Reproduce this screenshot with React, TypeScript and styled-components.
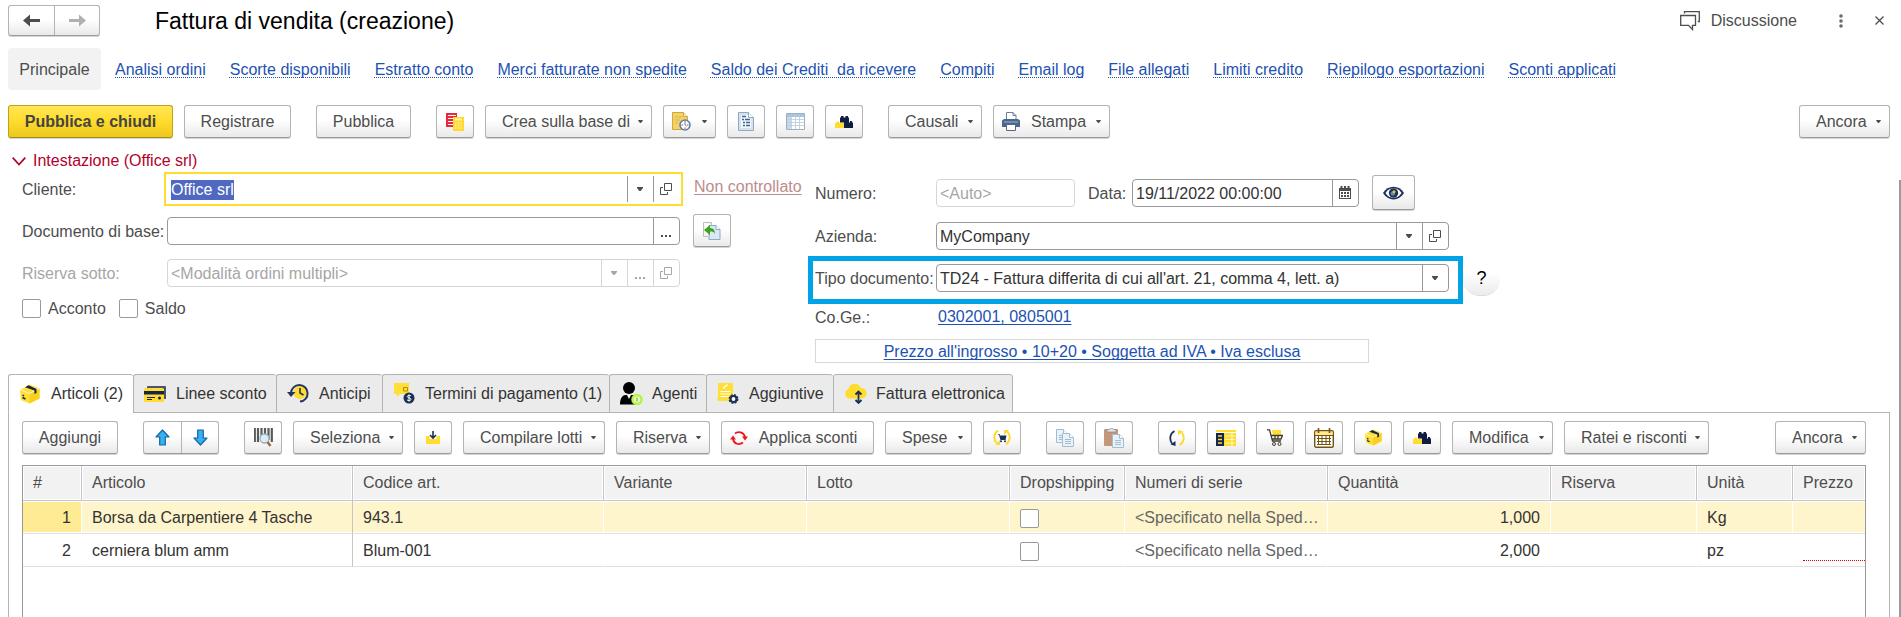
import React, { useEffect, useRef } from "react";
import styled, { createGlobalStyle, css } from "styled-components";

const GlobalStyle = createGlobalStyle`
  *, *::before, *::after { box-sizing: border-box; }
  body { margin: 0; background: #fff; }
  body, button, input, select {
    font-family: "Liberation Sans", Arial, sans-serif;
    font-size: 16px;
    line-height: 20px;
    color: #4d4d4d;
  }
  svg { display: block; flex: none; }
`;

/* ---------- page frame ---------- */

const Page = styled.div`
  display: flex;
  flex-direction: column;
  height: 100vh;
  overflow: hidden;
`;

const TitleBar = styled.header`
  display: flex;
  align-items: center;
  padding: 5px 17px 0 8px;
`;

const Title = styled.h1`
  flex: 1;
  margin: 0 0 0 55px;
  font-size: 23px;
  font-weight: 400;
  line-height: 30px;
  color: #000;
  white-space: nowrap;
`;

const buttonSkin = css`
  border: 1px solid #b3b3b3;
  border-bottom-color: #9b9b9b;
  border-radius: 3px;
  background: linear-gradient(#fff 45%, #e9e9e9);
  box-shadow: 0 1px 0 #d4d4d4;
`;

const Pair = styled.div<{ $cell: number; $height: number }>`
  ${buttonSkin}
  display: flex;
  height: ${(p) => p.$height}px;
  button {
    display: flex;
    align-items: center;
    justify-content: center;
    width: ${(p) => p.$cell}px;
    padding: 0;
    border: 0;
    background: none;
  }
  button + button {
    border-left: 1px solid #b3b3b3;
  }
`;

const PlainButton = styled.button`
  display: flex;
  align-items: center;
  gap: 11px;
  padding: 0;
  border: 0;
  background: none;
`;

const WindowActions = styled.div`
  display: flex;
  align-items: center;
  gap: 42px;
`;

const WindowControls = styled.div`
  display: flex;
  align-items: center;
  gap: 32px;
`;

const LinkBar = styled.nav`
  display: flex;
  align-items: center;
  gap: 24px;
  margin-top: 12px;
  padding: 0 8px;
  white-space: pre;
`;

const Current = styled.span`
  width: 93px;
  margin-right: -10px;
  padding: 12px 0 10px;
  border-radius: 4px;
  background: #f2f2f2;
  text-align: center;
`;

const NavLink = styled.a`
  padding-top: 2px;
  color: #1d52b3;
  text-decoration: underline dotted 1px;
  text-underline-offset: 2px;
  text-decoration-skip-ink: none;
`;

const Toolbar = styled.div<{ $inner?: boolean }>`
  display: flex;
  align-items: center;
  justify-content: space-between;
  padding: ${(p) => (p.$inner ? "8px 23px 11px 13px" : "15px 11px 0 8px")};
`;

const Groups = styled.div`
  display: flex;
  gap: 25px;
`;

const Group = styled.div`
  display: flex;
  gap: 11px;
`;

const Button = styled.button<{ $width: number; $menu?: boolean; $primary?: boolean; $tall?: boolean }>`
  ${buttonSkin}
  display: flex;
  flex: none;
  align-items: center;
  justify-content: ${(p) => (p.$menu ? "space-between" : "center")};
  gap: 8px;
  width: ${(p) => p.$width}px;
  height: ${(p) => (p.$tall ? 35 : 33)}px;
  padding: ${(p) => (p.$menu ? "0 8px 0 16px" : "0")};
  white-space: nowrap;
  ${(p) =>
    p.$primary &&
    css`
      border-color: #bfa01f;
      border-bottom-color: #a78b12;
      background: linear-gradient(#ffe658, #ffdd2d 45%, #edc81f);
      font-weight: 700;
      color: #444;
    `}
`;

const ButtonFace = styled.span<{ $tight?: boolean }>`
  display: flex;
  align-items: center;
  gap: 11px;
  margin-left: ${(p) => (p.$tight ? "-8px" : "0")};
`;

/* ---------- form ---------- */

const Body = styled.div`
  display: flex;
  flex: 1;
  min-height: 0;
`;

const Content = styled.main`
  display: flex;
  flex: 1;
  flex-direction: column;
  min-width: 0;
  padding: 13px 9px 0 8px;
`;

const ScrollBar = styled.div`
  flex: none;
  width: 2px;
  margin-top: 42px;
  background: #9b9b9b;
`;

const SectionHeader = styled.button`
  display: flex;
  align-items: center;
  align-self: flex-start;
  gap: 7px;
  padding: 0 0 0 4px;
  border: 0;
  background: none;
  color: #b3002d;
`;

const Form = styled.div`
  display: flex;
  padding: 4px 0 11px 14px;
`;

const LeftPane = styled.div`
  flex: 0 1 793px;
  display: flex;
  flex-direction: column;
`;

const RightPane = styled.div`
  flex: 1;
  display: flex;
  flex-direction: column;
`;

const Row = styled.div<{ $top?: number }>`
  display: flex;
  align-items: center;
  margin-top: ${(p) => p.$top ?? 0}px;
`;

const Label = styled.label<{ $width: number; $muted?: boolean; $indent?: boolean }>`
  flex: none;
  width: ${(p) => p.$width}px;
  padding: 2px 0 0 ${(p) => (p.$indent ? 13 : 0)}px;
  white-space: nowrap;
  color: ${(p) => (p.$muted ? "#a6a6a6" : "#4d4d4d")};
`;

const Field = styled.div<{ $width: number; $muted?: boolean; $focused?: boolean }>`
  display: flex;
  flex: 0 1 ${(p) => p.$width}px;
  min-width: 0;
  height: 28px;
  border: 1px solid ${(p) => (p.$focused ? "transparent" : p.$muted ? "#d6d6d6" : "#999")};
  border-radius: 4px;
  background: #fff;
  ${(p) =>
    p.$focused &&
    css`
      border-radius: 0;
      outline: 2px solid #ffdc30;
      outline-offset: 1px;
    `}
  input, select {
    flex: 1;
    width: 0;
    min-width: 0;
    padding: 2px 3px 0;
    border: 0;
    outline: 0;
    background: none;
    appearance: none;
    color: #333;
  }
  input::placeholder { color: #a6a6a6; opacity: 1; }
  input::selection { background: #5068c2; color: #fff; }
`;

const FieldButton = styled.button<{ $muted?: boolean }>`
  display: flex;
  align-items: center;
  justify-content: center;
  width: 26px;
  padding: 0 1px 0 0;
  border: 0;
  border-left: 1px solid ${(p) => (p.$muted ? "#d6d6d6" : "#999")};
  background: none;
  color: ${(p) => (p.$muted ? "#a6a6a6" : "#4d4d4d")};
`;

const SelectField = styled(Field)`
  position: relative;
`;

const SelectArrow = styled.span`
  position: absolute;
  inset: 0 0 0 auto;
  display: flex;
  align-items: center;
  justify-content: center;
  width: 26px;
  padding-right: 1px;
  border-left: 1px solid #999;
  pointer-events: none;
`;

const Aside = styled.div`
  margin-left: 13px;
`;

const StatusLink = styled.a`
  align-self: flex-start;
  margin-left: 14px;
  line-height: 24px;
  color: #bd8b8b;
  text-underline-offset: 2px;
  white-space: nowrap;
`;

const Check = styled.input.attrs({ type: "checkbox" })`
  flex: none;
  width: 19px;
  height: 19px;
  margin: 0;
  border: 1px solid #999;
  border-radius: 2px;
  background: #fff;
  appearance: none;
`;

const CheckLabel = styled.label`
  display: flex;
  align-items: center;
  gap: 7px;
  margin-right: 13px;
  height: 19px;
`;

const Highlight = styled.div`
  position: relative;
  display: flex;
  flex: 0 1 634px;
  align-items: center;
  &::after {
    content: "";
    position: absolute;
    inset: -8px -14px -12px -7px;
    border: 5px solid #00a2e8;
    pointer-events: none;
  }
`;

const HelpButton = styled.button`
  width: 37px;
  height: 34px;
  margin: -3px 0 -3px 14px;
  padding: 0;
  border: 0;
  border-radius: 18px;
  background: linear-gradient(#fff 35%, #ebebeb);
  box-shadow: 0 1px 0 #dcdcdc;
  font-size: 18px;
  color: #000;
`;

const TextLink = styled.a`
  color: #1d52b3;
  text-underline-offset: 2px;
  text-decoration-skip-ink: none;
  white-space: nowrap;
`;

const PriceBox = styled.div`
  width: 554px;
  margin-top: 11px;
  padding-top: 2px;
  border: 1px solid #d9d9d9;
  text-align: center;
`;

/* ---------- tabs and table ---------- */

const Tabs = styled.div`
  display: flex;
  flex: none;
  height: 39px;
  margin-bottom: -1px;
`;

const Tab = styled.button<{ $width: number; $active?: boolean }>`
  display: flex;
  flex: none;
  align-items: center;
  gap: 10px;
  width: ${(p) => p.$width}px;
  padding: 0 0 0 10px;
  border: 1px solid #b3b3b3;
  border-right-width: 0;
  border-bottom-color: ${(p) => (p.$active ? "#fff" : "#b3b3b3")};
  border-radius: 3px 3px 0 0;
  background: ${(p) => (p.$active ? "#fff" : "#ebebeb")};
  color: #333;
  white-space: nowrap;
  z-index: 1;
  &:last-child { border-right-width: 1px; }
`;

const TabIcon = styled.span`
  display: flex;
  flex: none;
  justify-content: center;
  width: 22px;
`;

const TabPanel = styled.section`
  display: flex;
  flex: 1;
  flex-direction: column;
  min-height: 0;
  border: 1px solid #b3b3b3;
  border-bottom: 0;
`;

const TableFrame = styled.div`
  flex: 1;
  margin: 0 23px 0 13px;
  border: 1px solid #999;
  border-bottom: 0;
  overflow: hidden;
`;

const Table = styled.table`
  width: 100%;
  table-layout: fixed;
  border-spacing: 0;
`;

const Head = styled.th`
  height: 35px;
  padding: 0 0 0 10px;
  border-right: 1px solid #c6c6c6;
  border-bottom: 1px solid #c6c6c6;
  background: #f2f2f2;
  box-shadow: inset 0 0 0 1px #fff;
  font-weight: 400;
  text-align: left;
  white-space: nowrap;
  &:last-child { border-right: 0; }
`;

const Cell = styled.td<{ $right?: boolean; $divider?: boolean; $muted?: boolean }>`
  height: 33px;
  padding: 2px 10px 0;
  border-right: 1px solid ${(p) => (p.$divider ? "#c6c6c6" : "#fff")};
  border-bottom: 1px solid #e0e0e0;
  text-align: ${(p) => (p.$right ? "right" : "left")};
  white-space: nowrap;
  color: ${(p) => (p.$muted ? "#666" : "#333")};
  &:last-child { border-right: 0; padding-right: 0; }
  input { display: block; }
`;

const TableRow = styled.tr<{ $selected?: boolean }>`
  ${(p) =>
    p.$selected &&
    css`
      ${Cell} {
        background: #fff5cc;
        box-shadow: inset 0 1px 0 #fff, inset 0 -1px 0 #fff;
      }
      ${Cell}:first-child { background: #ffeb94; }
    `}
`;

const Missing = styled.span`
  display: block;
  height: 19px;
  border-bottom: 1px dotted #e00000;
`;

/* ---------- icons ---------- */

const Caret = ({ size = 5 }: { size?: number }) => (
  <svg width={size} height={size === 5 ? 3 : 4} viewBox="0 0 6 4" fill="currentColor">
    <path d="M0 0h6v1L3.6 4H2.4L0 1z" />
  </svg>
);

const Dots = () => (
  <svg width="12" height="14" viewBox="0 0 12 14" fill="currentColor">
    <path d="M1 11h2v2H1zM5 11h2v2H5zM9 11h2v2H9z" />
  </svg>
);

const OpenIcon = () => (
  <svg width="12" height="12" viewBox="0 0 12 12" fill="none" stroke="currentColor">
    <path d="M4.5.5h7v7h-7zM3 4.500H.5v7h7V9" />
  </svg>
);

const NavArrow = ({ right }: { right?: boolean }) => (
  <svg width="17" height="13" viewBox="0 0 17 13" fill={right ? "#b0b0b0" : "#4d4d4d"}>
    <path d={right ? "M17 6.5 10 .5v4.500H0v3h10v4.500z" : "M0 6.500 7 .5v4.500h10v3H7v4.500z"} />
  </svg>
);

const ChatIcon = () => (
  <svg width="20" height="20" viewBox="0 0 20 20" fill="none" stroke="#4d4d4d" strokeWidth="1.300">
    <path d="M4.500 2.500V.7h14.800v9.800h-1.500M.7 4.500h14.800v9.800h-3v4.200l-4-4.200H.7z" />
  </svg>
);

const KebabIcon = () => (
  <svg width="4" height="14" viewBox="0 0 4 14" fill="#6b6b6b">
    <circle cx="2" cy="2" r="1.800" />
    <circle cx="2" cy="7" r="1.800" />
    <circle cx="2" cy="12" r="1.800" />
  </svg>
);

const CloseIcon = () => (
  <svg width="9" height="9" viewBox="0 0 9 9" stroke="#4d4d4d" strokeWidth="1.300">
    <path d="M.5.5l8 8M8.500.5l-8 8" />
  </svg>
);

const ChevronIcon = () => (
  <svg width="14" height="9" viewBox="0 0 14 9" fill="none" stroke="#b3002d" strokeWidth="1.700">
    <path d="M.7.7 7 7.500 13.300.7" />
  </svg>
);

const ReportIcon = () => (
  <svg width="18" height="18" viewBox="0 0 18 18">
    <path d="M0 0h11v14H0z" fill="#e8283c" />
    <path d="M2 2.500h8M2 5.500h8M2 8.500h5M2 11.500h5" stroke="#fff" strokeWidth="1.200" />
    <path d="M7 4h11v14H7z" fill="#ffd92e" />
    <path d="M9 6.500h7" stroke="#fff3a8" strokeWidth="2" />
    <path d="M9 10h7M9 12.500h7M9 15h7" stroke="#fff3a8" strokeDasharray="1.500 1.200" strokeWidth="1.300" />
  </svg>
);

const DocClockIcon = () => (
  <svg width="19" height="19" viewBox="0 0 19 19">
    <path d="M.5.5h11l4 4v13H.5z" fill="#f2d36b" stroke="#cfa83a" />
    <path d="M11.500.5v4h4" fill="#fff3c0" stroke="#cfa83a" />
    <path d="M3 5h7M3 8h5M3 11h3" stroke="#d9b64a" />
    <circle cx="13" cy="13" r="5" fill="#fff" stroke="#5b80b0" strokeWidth="1.600" />
    <path d="M13 9v1.500M13 15.500V17M9.500 13H11M15 13h1.500" stroke="#e0362c" />
    <path d="M13 10.500V13l1.500 1" fill="none" stroke="#5b80b0" />
  </svg>
);

const DocListIcon = () => (
  <svg width="16" height="19" viewBox="0 0 16 19">
    <path d="M.5.5h10l5 5v13H.5z" fill="#d6e3ee" stroke="#8fa9c2" />
    <path d="M3 3h7v3h3v10H3z" fill="#f3f8fc" />
    <path d="M10.500.5v5h5" fill="#fff" stroke="#8fa9c2" />
    <path d="M4 4.500h4M4 7.500h2M7 7.500h5M5 10.500h2M8 10.500h4M5 13.500h2M8 13.500h4" stroke="#3f6690" strokeWidth="1.400" />
  </svg>
);

const GridIcon = () => (
  <svg width="19" height="17" viewBox="0 0 19 17">
    <path d="M.5.5h18v16H.5z" fill="#fff" stroke="#9bb0c4" />
    <path d="M1 1h17v3H1z" fill="#a9c4dc" />
    <path d="M1 4h4v12H1z" fill="#c8dae8" />
    <path d="M5.500 1v15M9.500 1v15M13.500 1v15M1 6.500h17M1 9.500h17M1 12.500h17" stroke="#b9cadb" strokeWidth=".8" />
  </svg>
);

const BlocksIcon = () => (
  <svg width="18" height="12" viewBox="0 0 18 12">
    <path d="M0 12V7h1.500V5.500H4V7h5v5z" fill="#ffdc2e" />
    <path d="M5 6.500V1.500h1V0h2.500v1.500h2V0H13v1.500h1v5h1V5h2v1.500h1V12H9V6.500z" fill="#0f1d42" />
  </svg>
);

const PrinterIcon = () => (
  <svg width="18" height="20" viewBox="0 0 18 20">
    <path d="M4.500 8V.5H11l3 3V8" fill="#fff" stroke="#6e7f94" />
    <path d="M11 .5v3h3" fill="none" stroke="#6e7f94" />
    <path d="M0 8.500 2 7h14l2 1.500V15H0z" fill="#4a6690" />
    <path d="M2 10h14" stroke="#9db3cf" />
    <path d="M4.500 12.500h9v6h-9z" fill="#fff" stroke="#56677f" />
  </svg>
);

const BasisIcon = () => (
  <svg width="18" height="18" viewBox="0 0 18 18">
    <path d="M.5.5h8V3M.5.500v14H5" fill="#f3f3f3" stroke="#bdbdbd" />
    <path d="M6 3.500h7l4 4V17.500H6z" fill="#dbe9f5" stroke="#8ca9c5" />
    <path d="M13 3.500v4h4" fill="#fff" stroke="#8ca9c5" />
    <path d="M1 8l6-5v3c4 0 5 3 5 6-1-2-2-2.500-5-2.500V13z" fill="#3fa21c" />
  </svg>
);

const EyeIcon = () => (
  <svg width="21" height="14" viewBox="0 0 21 14">
    <path d="M0 7C5-1.500 16-1.500 21 7 16 15.500 5 15.500 0 7z" fill="#1b2f57" />
    <path d="M2.500 7C5 3 8 2.200 10.500 2.200S16 3 18.500 7C16 11 13 11.800 10.500 11.800S5 11 2.500 7z" fill="#fff" />
    <circle cx="10.500" cy="7" r="4.700" fill="#1b2f57" />
    <circle cx="9.800" cy="7.500" r="2.300" fill="#5f88ad" />
    <circle cx="11" cy="5.800" r="1.500" fill="#e8c83a" />
  </svg>
);

const DateIcon = () => (
  <svg width="12" height="13" viewBox="0 0 12 13">
    <path d="M0 2h12v11H0z" fill="#4d4d4d" />
    <path d="M1 5h10v7H1z" fill="#fff" />
    <path d="M1.500 0h2v3h-2zM5 0h2v3H5zM8.500 0h2v3h-2z" fill="#4d4d4d" />
    <path d="M2 7h8M2 10h8" stroke="#4d4d4d" strokeDasharray="2 1" strokeWidth="2" />
  </svg>
);

const BoxIcon = ({ size = 20 }: { size?: number }) => (
  <svg width={size} height={size} viewBox="0 0 20 20">
    <path d="M0 6 10 .5 19.500 4.500v10L9.500 19.500 1 16z" fill="#ffdf35" />
    <path d="M9.500 9.500v10l10-5v-10z" fill="#f9d01c" />
    <path d="M1 6 9.500 9.500l9.500-5" fill="none" stroke="#fff" strokeWidth=".8" />
    <path d="M5 3.300 8.500 1.300 16.500 5v4l-2 1V6.500z" fill="#15254b" />
    <path d="M2.500 11l1.500 1M2.500 13.500 5.500 15" stroke="#15254b" strokeWidth="1.500" />
  </svg>
);

const CardIcon = () => (
  <svg width="22" height="16" viewBox="0 0 22 16">
    <path d="M4 0h17a1 1 0 0 1 1 1v12h-2V3H3V1a1 1 0 0 1 1-1z" fill="#4b5468" />
    <rect y="2" width="20" height="14" rx="1.500" fill="#ffdc2e" />
    <path d="M0 5h20v3.500H0z" fill="#15254b" />
    <path d="M3 11.500h8M3 13.500h5" stroke="#15254b" />
    <circle cx="15.500" cy="12" r="1.500" fill="#15254b" />
  </svg>
);

const HistoryIcon = () => (
  <svg width="22" height="19" viewBox="0 0 22 19">
    <circle cx="13" cy="8.500" r="6.500" fill="#ffdc2e" />
    <path d="M4 9a8.300 8.300 0 1 1 9 8.600" fill="none" stroke="#24365c" strokeWidth="2" />
    <path d="M0 8h8.500L4 13z" fill="#24365c" />
    <path d="M13 4v5l3.500 2" fill="none" stroke="#24365c" strokeWidth="1.600" />
  </svg>
);

const TermsIcon = () => (
  <svg width="22" height="21" viewBox="0 0 22 21">
    <path d="M1 0h15v11H7l-3 3v-3H1z" fill="#ffdf35" />
    <path d="M10.500 4.500h4v3.500h-4z" fill="none" stroke="#b58f00" />
    <circle cx="16" cy="15" r="5.500" fill="#1b2f57" />
    <path d="M18 13c-.5-1-3.700-1-3.700.6s3.700 1 3.700 2.700-3.200 1.700-4 .5M16 11.500v7" fill="none" stroke="#fff" />
  </svg>
);

const AgentIcon = () => (
  <svg width="23" height="23" viewBox="0 0 23 23">
    <circle cx="9" cy="6" r="6" fill="#000" />
    <path d="M0 22.500c0-6 2-9 5.500-9.500h7c3 .5 5 3 5.500 9.500z" fill="#000" />
    <path d="M7 13l2 4 2-4z" fill="#fff" />
    <circle cx="17" cy="17.500" r="4.500" fill="#e9f7cf" stroke="#b4f53f" strokeWidth="2.500" />
    <path d="M17 15.500v4" stroke="#8fca30" strokeWidth="1.500" />
  </svg>
);

const ExtraIcon = () => (
  <svg width="22" height="21" viewBox="0 0 22 21">
    <path d="M2 0h13a1 1 0 0 1 1 1v17H2.500A2.500 2.500 0 0 1 0 15.500h1V1a1 1 0 0 1 1-1z" fill="#ffdf35" />
    <path d="M6 5.500 10.500 1.500M3.500 8.500h10M3.500 11h10M3.500 13.500h8" stroke="#fff" strokeWidth="1.200" />
    <circle cx="16.500" cy="16" r="3" fill="#fff" stroke="#1b2f57" strokeWidth="2.200" />
    <circle cx="16.500" cy="16" r="4.300" fill="none" stroke="#1b2f57" strokeWidth="1.300" strokeDasharray="2 1.380" />
  </svg>
);

const CloudIcon = () => (
  <svg width="23" height="20" viewBox="0 0 23 20">
    <path d="M5 14.500A5 5 0 0 1 4.500 5 6.500 6.500 0 0 1 17 4a5 5 0 0 1 1 10.500z" fill="#ffdc2e" />
    <path d="M14.500 8v10M11.500 10.500l3-3 3 3M11.500 16l3 3 3-3" fill="none" stroke="#1b2f57" strokeWidth="1.800" />
  </svg>
);

const BlueArrow = ({ down }: { down?: boolean }) => (
  <svg width="15" height="17" viewBox="0 0 15 17" fill="#35b0f0" stroke="#1765a0" strokeWidth="1.200" strokeLinejoin="round">
    <path d={down ? "M7.500 16 1 9h3.700V1h5.600v8H14z" : "M7.500 1 1 8h3.700v8h5.600V8H14z"} />
  </svg>
);

const BarcodeIcon = () => (
  <svg width="19" height="19" viewBox="0 0 19 19">
    <path d="M.8 0v14M4 0v14M7.500 0v13M11 0v6M14.500 0v12M17.800 0v14" stroke="#5a5a5a" strokeWidth="2.200" />
    <circle cx="10.500" cy="10.500" r="4.500" fill="#d9ecf8" stroke="#9aaebd" strokeWidth="1.300" />
    <path d="M13.500 14l3 4" stroke="#a5673a" strokeWidth="2.400" />
  </svg>
);

const ImportIcon = () => (
  <svg width="14" height="13" viewBox="0 0 14 13">
    <path d="M0 5h3.500v3h7V5H14v8H0z" fill="#ffdc2e" />
    <path d="M7 0v6M4 4l3 3 3-3" fill="none" stroke="#1b2f57" strokeWidth="1.600" />
  </svg>
);

const RedSyncIcon = () => (
  <svg width="18" height="14" viewBox="0 0 18 14">
    <path d="M5 2.500C8-.2 14 1 15 6M13 11.500C9 14.500 4 13 3 8" fill="none" stroke="#f0141e" strokeWidth="1.800" />
    <path d="M12 5.500h6L15 9.500zM0 8.500h6L3 4.500z" fill="#f0141e" />
  </svg>
);

const CartSyncIcon = () => (
  <svg width="18" height="17" viewBox="0 0 18 17">
    <path d="M5 1.500C1 4 0 9.500 3.500 14M13 15.500c4-3 5-8.500 1.500-13" fill="none" stroke="#ffd92e" strokeWidth="2" />
    <path d="M2 16h5v-5zM11 1h5l-5 5z" fill="#ffd92e" />
    <path d="M4.500 5h2l.5 1.500h6.500L12.500 11h-5L6 6" fill="#1b2f57" />
    <circle cx="8" cy="12.300" r="1" fill="#1b2f57" />
    <circle cx="12" cy="12.300" r="1" fill="#1b2f57" />
  </svg>
);

const Sheet = ({ x, y }: { x: number; y: number }) => (
  <g transform={`translate(${x} ${y})`}>
    <path d="M.5.5h7l4 4v9H.5z" fill="#eaf2f8" stroke="#a3bdd0" />
    <path d="M7.500.5v4h4" fill="#fff" stroke="#a3bdd0" />
    <path d="M3 6.500h6M3 8.500h6M3 10.500h6" stroke="#a3bdd0" />
  </g>
);

const CopyIcon = () => (
  <svg width="18" height="18" viewBox="0 0 18 18">
    <Sheet x={0} y={0} />
    <Sheet x={6} y={4} />
  </svg>
);

const PasteIcon = () => (
  <svg width="20" height="20" viewBox="0 0 20 20">
    <rect y="1" width="14" height="17" rx="1" fill="#c4977a" />
    <path d="M3 3V1.500h2.500C6 0 9 0 9.500 1.500H12V4H3z" fill="#e4e4e4" stroke="#8e8e8e" strokeWidth=".8" />
    <Sheet x={8} y={6} />
  </svg>
);

const RecycleIcon = () => (
  <svg width="16" height="18" viewBox="0 0 16 18">
    <path d="M5.500 2C1 4.500 0 10 3 14.500" fill="none" stroke="#1b2f57" strokeWidth="1.800" />
    <path d="M1.500 15.500 6.500 17V12z" fill="#1b2f57" />
    <path d="M10.500 16c4.500-2.500 5.500-8 2.500-12.500" fill="none" stroke="#ffd92e" strokeWidth="1.800" />
    <path d="M14.500 2.500 9 1v5z" fill="#ffd92e" />
  </svg>
);

const PanelIcon = () => (
  <svg width="20" height="16" viewBox="0 0 20 16">
    <path d="M0 0h20v2H0zM8 3h12v13H8z" fill="#ffdc2e" />
    <path d="M0 3h8v13H0z" fill="#15254b" />
    <path d="M2 6h4M2 9.500h4M2 13h4" stroke="#ffdc2e" strokeWidth="1.600" />
    <path d="M9 6h10M9 9.500h10M9 13h10" stroke="#fff6bf" />
    <path d="M16 3v13" stroke="#fff" strokeWidth=".8" />
  </svg>
);

const CartIcon = () => (
  <svg width="16" height="17" viewBox="0 0 16 17">
    <path d="M5 1h9v6H6z" fill="#ffdc2e" />
    <path d="M0 .8h2.500L5.500 12H14M4 6.500h11.500L14 10H5M8 7v3M11 7v3" fill="none" stroke="#3e3a2c" strokeWidth="1.300" />
    <circle cx="7" cy="15" r="1.500" fill="none" stroke="#3e3a2c" />
    <circle cx="12.500" cy="15" r="1.500" fill="none" stroke="#3e3a2c" />
  </svg>
);

const CalendarIcon = () => (
  <svg width="20" height="20" viewBox="0 0 20 20">
    <rect x=".7" y="2.700" width="18.600" height="16.600" rx="1.500" fill="#fff" stroke="#735312" strokeWidth="1.400" />
    <path d="M1.500 3.500h17V7h-17z" fill="#ffe98a" />
    <path d="M4.500 0v5M15.500 0v5" stroke="#735312" strokeWidth="1.600" />
    <path d="M1 7.500h18M3 10.500h14M3 13.500h14M3 16.500h14M4.500 8v9M8 8v9M12 8v9M15.500 8v9" stroke="#735312" />
  </svg>
);

/* ---------- data ---------- */

const links = [
  "Analisi ordini",
  "Scorte disponibili",
  "Estratto conto",
  "Merci fatturate non spedite",
  "Saldo dei Crediti  da ricevere",
  "Compiti",
  "Email log",
  "File allegati",
  "Limiti credito",
  "Riepilogo esportazioni",
  "Sconti applicati",
];

const tabs = [
  { label: "Articoli (2)", width: 125, icon: <BoxIcon /> },
  { label: "Linee sconto", width: 143, icon: <CardIcon /> },
  { label: "Anticipi", width: 106, icon: <HistoryIcon /> },
  { label: "Termini di pagamento (1)", width: 227, icon: <TermsIcon /> },
  { label: "Agenti", width: 97, icon: <AgentIcon /> },
  { label: "Aggiuntive", width: 127, icon: <ExtraIcon /> },
  { label: "Fattura elettronica", width: 180, icon: <CloudIcon /> },
];

const columns = [
  { title: "#", width: 59 },
  { title: "Articolo", width: 271 },
  { title: "Codice art.", width: 251 },
  { title: "Variante", width: 203 },
  { title: "Lotto", width: 203 },
  { title: "Dropshipping", width: 115 },
  { title: "Numeri di serie", width: 203 },
  { title: "Quantità", width: 223 },
  { title: "Riserva", width: 146 },
  { title: "Unità", width: 96 },
  { title: "Prezzo" },
];

const rows = [
  { n: 1, name: "Borsa da Carpentiere 4 Tasche", code: "943.1", qty: "1,000", unit: "Kg", selected: true },
  { n: 2, name: "cerniera blum amm", code: "Blum-001", qty: "2,000", unit: "pz", selected: false },
];

/* ---------- composed parts ---------- */

const MenuButton = ({ label, width, icon }: { label?: string; width: number; icon?: React.ReactNode }) => (
  <Button type="button" $width={width} $menu>
    <ButtonFace $tight={!!icon}>
      {icon}
      {label}
    </ButtonFace>
    <Caret />
  </Button>
);

const IconButton = ({ label, children }: { label: string; children: React.ReactNode }) => (
  <Button type="button" $width={38} aria-label={label}>
    {children}
  </Button>
);

export default function App() {
  const client = useRef<HTMLInputElement>(null);

  useEffect(() => {
    client.current?.focus();
    client.current?.select();
  }, []);

  return (
    <Page>
      <GlobalStyle />
      <TitleBar>
        <Pair $cell={45} $height={31}>
          <button type="button" aria-label="Indietro"><NavArrow /></button>
          <button type="button" aria-label="Avanti"><NavArrow right /></button>
        </Pair>
        <Title>Fattura di vendita (creazione)</Title>
        <WindowActions>
          <PlainButton type="button"><ChatIcon />Discussione</PlainButton>
          <WindowControls>
            <PlainButton type="button" aria-label="Altro"><KebabIcon /></PlainButton>
            <PlainButton type="button" aria-label="Chiudi"><CloseIcon /></PlainButton>
          </WindowControls>
        </WindowActions>
      </TitleBar>

      <LinkBar>
        <Current>Principale</Current>
        {links.map((l) => (
          <NavLink key={l} href="#">{l}</NavLink>
        ))}
      </LinkBar>

      <Toolbar>
        <Groups>
          <Group>
            <Button type="button" $width={165} $primary>Pubblica e chiudi</Button>
            <Button type="button" $width={107}>Registrare</Button>
          </Group>
          <Button type="button" $width={95}>Pubblica</Button>
          <Group>
            <IconButton label="Movimenti"><ReportIcon /></IconButton>
            <MenuButton label="Crea sulla base di" width={167} />
            <MenuButton width={53} icon={<DocClockIcon />} />
            <IconButton label="Documento"><DocListIcon /></IconButton>
            <IconButton label="Elenco"><GridIcon /></IconButton>
            <IconButton label="Componenti"><BlocksIcon /></IconButton>
          </Group>
          <Group>
            <MenuButton label="Causali" width={94} />
            <MenuButton label="Stampa" width={117} icon={<PrinterIcon />} />
          </Group>
        </Groups>
        <MenuButton label="Ancora" width={91} />
      </Toolbar>

      <Body>
        <Content>
          <SectionHeader type="button" aria-expanded="true">
            <ChevronIcon />
            Intestazione (Office srl)
          </SectionHeader>
          <Form>
            <LeftPane>
              <Row>
                <Label $width={145} htmlFor="cliente">Cliente:</Label>
                <Field $width={513} $focused>
                  <input id="cliente" ref={client} defaultValue="Office srl" />
                  <FieldButton type="button" aria-label="Elenco"><Caret size={6} /></FieldButton>
                  <FieldButton type="button" aria-label="Apri"><OpenIcon /></FieldButton>
                </Field>
                <StatusLink href="#">Non controllato</StatusLink>
              </Row>
              <Row $top={11}>
                <Label $width={145} htmlFor="base">Documento di base:</Label>
                <Field $width={513}>
                  <input id="base" />
                  <FieldButton type="button" aria-label="Scegli"><Dots /></FieldButton>
                </Field>
                <Aside>
                  <IconButton label="Riempi dalla base"><BasisIcon /></IconButton>
                </Aside>
              </Row>
              <Row $top={12}>
                <Label $width={145} $muted htmlFor="riserva">Riserva sotto:</Label>
                <Field $width={513} $muted>
                  <input id="riserva" placeholder="<Modalità ordini multipli>" disabled />
                  <FieldButton type="button" $muted disabled aria-label="Elenco"><Caret size={6} /></FieldButton>
                  <FieldButton type="button" $muted disabled aria-label="Scegli"><Dots /></FieldButton>
                  <FieldButton type="button" $muted disabled aria-label="Apri"><OpenIcon /></FieldButton>
                </Field>
              </Row>
              <Row $top={12}>
                <CheckLabel><Check />Acconto</CheckLabel>
                <CheckLabel><Check />Saldo</CheckLabel>
              </Row>
            </LeftPane>

            <RightPane>
              <Row>
                <Label $width={121} htmlFor="numero">Numero:</Label>
                <Field $width={139} $muted>
                  <input id="numero" placeholder="<Auto>" disabled />
                </Field>
                <Label $width={57} $indent htmlFor="data">Data:</Label>
                <Field $width={227}>
                  <input id="data" defaultValue="19/11/2022 00:00:00" />
                  <FieldButton type="button" aria-label="Calendario"><DateIcon /></FieldButton>
                </Field>
                <Aside>
                  <Button type="button" $width={43} $tall aria-label="Mostra"><EyeIcon /></Button>
                </Aside>
              </Row>
              <Row $top={12}>
                <Label $width={121} htmlFor="azienda">Azienda:</Label>
                <Field $width={513}>
                  <input id="azienda" defaultValue="MyCompany" />
                  <FieldButton type="button" aria-label="Elenco"><Caret size={6} /></FieldButton>
                  <FieldButton type="button" aria-label="Apri"><OpenIcon /></FieldButton>
                </Field>
              </Row>
              <Row $top={14}>
                <Highlight>
                  <Label $width={121} htmlFor="tipo">Tipo documento:</Label>
                  <SelectField $width={513}>
                    <select id="tipo">
                      <option>TD24 - Fattura differita di cui all'art. 21, comma 4, lett. a)</option>
                    </select>
                    <SelectArrow><Caret size={6} /></SelectArrow>
                  </SelectField>
                </Highlight>
                <HelpButton type="button">?</HelpButton>
              </Row>
              <Row $top={14}>
                <Label as="span" $width={123}>Co.Ge.:</Label>
                <TextLink href="#">0302001, 0805001</TextLink>
              </Row>
              <PriceBox>
                <TextLink href="#">Prezzo all'ingrosso • 10+20 • Soggetta ad IVA • Iva esclusa</TextLink>
              </PriceBox>
            </RightPane>
          </Form>

          <Tabs role="tablist">
            {tabs.map((t, i) => (
              <Tab key={t.label} type="button" role="tab" aria-selected={i === 0} $width={t.width} $active={i === 0}>
                <TabIcon>{t.icon}</TabIcon>
                {t.label}
              </Tab>
            ))}
          </Tabs>
          <TabPanel>
            <Toolbar $inner>
              <Groups>
                <Button type="button" $width={96}>Aggiungi</Button>
                <Pair $cell={37} $height={33}>
                  <button type="button" aria-label="Sposta su"><BlueArrow /></button>
                  <button type="button" aria-label="Sposta giù"><BlueArrow down /></button>
                </Pair>
                <Group>
                  <IconButton label="Cerca codice a barre"><BarcodeIcon /></IconButton>
                  <MenuButton label="Seleziona" width={110} />
                  <IconButton label="Importa"><ImportIcon /></IconButton>
                  <MenuButton label="Compilare lotti" width={142} />
                  <MenuButton label="Riserva" width={94} />
                  <Button type="button" $width={153}>
                    <ButtonFace $tight><RedSyncIcon />Applica sconti</ButtonFace>
                  </Button>
                  <MenuButton label="Spese" width={87} />
                  <IconButton label="Aggiorna ordine"><CartSyncIcon /></IconButton>
                </Group>
                <Group>
                  <IconButton label="Copia"><CopyIcon /></IconButton>
                  <IconButton label="Incolla"><PasteIcon /></IconButton>
                </Group>
                <Group>
                  <IconButton label="Aggiorna"><RecycleIcon /></IconButton>
                  <IconButton label="Pannello"><PanelIcon /></IconButton>
                  <IconButton label="Carrello"><CartIcon /></IconButton>
                  <IconButton label="Date"><CalendarIcon /></IconButton>
                  <IconButton label="Articoli"><BoxIcon size={17} /></IconButton>
                  <IconButton label="Componenti"><BlocksIcon /></IconButton>
                  <MenuButton label="Modifica" width={101} />
                  <MenuButton label="Ratei e risconti" width={145} />
                </Group>
              </Groups>
              <MenuButton label="Ancora" width={91} />
            </Toolbar>
            <TableFrame>
              <Table>
                <colgroup>
                  {columns.map((c) => (
                    <col key={c.title} width={c.width} />
                  ))}
                </colgroup>
                <thead>
                  <tr>
                    {columns.map((c) => (
                      <Head key={c.title}>{c.title}</Head>
                    ))}
                  </tr>
                </thead>
                <tbody>
                  {rows.map((r) => (
                    <TableRow key={r.n} $selected={r.selected}>
                      <Cell $right>{r.n}</Cell>
                      <Cell $divider>{r.name}</Cell>
                      <Cell>{r.code}</Cell>
                      <Cell />
                      <Cell />
                      <Cell><Check aria-label="Dropshipping" /></Cell>
                      <Cell $muted>{"<Specificato nella Sped…"}</Cell>
                      <Cell $right>{r.qty}</Cell>
                      <Cell />
                      <Cell>{r.unit}</Cell>
                      <Cell>{!r.selected && <Missing />}</Cell>
                    </TableRow>
                  ))}
                </tbody>
              </Table>
            </TableFrame>
          </TabPanel>
        </Content>
        <ScrollBar />
      </Body>
    </Page>
  );
}
